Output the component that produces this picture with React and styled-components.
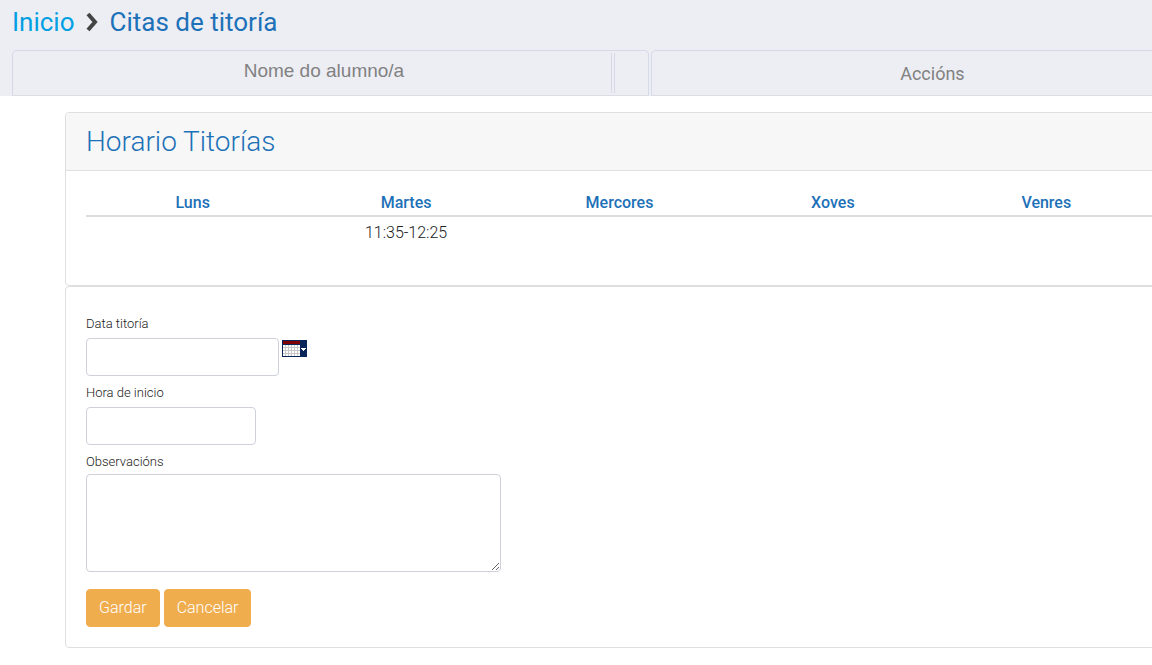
import React, { useState } from 'react';
import styled, { createGlobalStyle, css } from 'styled-components';

const days = ['Luns', 'Martes', 'Mercores', 'Xoves', 'Venres'];
const hours = ['', '11:35-12:25', '', '', ''];

export default function App() {
    const [form, setForm] = useState({ date: '', start: '', notes: '' });
    const change = (e) => setForm({ ...form, [e.target.name]: e.target.value });

    return (
        <Page>
            <GlobalStyle />
            <Header>
                <Breadcrumb aria-label="breadcrumb">
                    <a href="#inicio">Inicio</a>
                    <Chevron viewBox="0 0 15 20" aria-hidden="true">
                        <path d="M3 2 L10 10 L3 18" />
                    </Chevron>
                    <Title>Citas de titoría</Title>
                </Breadcrumb>
                <Tabs>
                    <NameTab>
                        <Name>Nome do alumno/a</Name>
                        <Divider />
                    </NameTab>
                    <ActionsTab>Accións</ActionsTab>
                </Tabs>
            </Header>
            <main>
                <Cards>
                    <Card>
                        <CardHeader>
                            <CardTitle>Horario Titorías</CardTitle>
                        </CardHeader>
                        <CardBody>
                            <Schedule>
                                <thead>
                                    <tr>{days.map((day) => <th key={day} scope="col">{day}</th>)}</tr>
                                </thead>
                                <tbody>
                                    <tr>{hours.map((hour, i) => <td key={days[i]}>{hour}</td>)}</tr>
                                </tbody>
                            </Schedule>
                        </CardBody>
                    </Card>
                    <Card>
                        <Form onSubmit={(e) => e.preventDefault()}>
                            <Label htmlFor="date">Data titoría</Label>
                            <DateRow>
                                <Input id="date" name="date" $width={193} value={form.date} onChange={change} />
                                <PickerButton type="button" aria-label="Calendario">
                                    <CalendarIcon />
                                </PickerButton>
                            </DateRow>
                            <Label htmlFor="start">Hora de inicio</Label>
                            <Input id="start" name="start" $width={170} value={form.start} onChange={change} />
                            <Label htmlFor="notes">Observacións</Label>
                            <TextArea id="notes" name="notes" value={form.notes} onChange={change} />
                            <Buttons>
                                <Button type="submit">Gardar</Button>
                                <Button type="button">Cancelar</Button>
                            </Buttons>
                        </Form>
                    </Card>
                </Cards>
            </main>
        </Page>
    );
}

function CalendarIcon() {
    return (
        <svg width="25" height="17" viewBox="0 0 25 17" shapeRendering="crispEdges" aria-hidden="true">
            <rect width="25" height="17" fill="#0a2558" />
            <rect x="1" y="1" width="17" height="3" fill="#800000" />
            <rect x="1" y="5" width="17" height="11" fill="#c8c8c8" />
            {[5, 8, 11, 14].map((y) =>
                [1, 4, 7, 10, 13, 16].map((x) => (
                    <rect key={`${x}-${y}`} x={x} y={y} width="2" height="2" fill="#fff" />
                ))
            )}
            <path d="M19 8h5v1h-1v1h-1v1h-1v-1h-1v-1h-1z" fill="#fff" />
        </svg>
    );
}

const GlobalStyle = createGlobalStyle`
*, *::before, *::after {
    box-sizing: border-box;
}
body {
    margin: 0;
    background: #fff;
    color: #222;
    font-family: Roboto, "Liberation Sans", sans-serif;
    font-size: 16px;
    font-weight: 300;
    line-height: 24px;
}
`

const Page = styled.div`
    overflow-x: hidden;
`

const Header = styled.header`
    background: #edeef4;
    padding: 6px 0 0 12px;
`

const Breadcrumb = styled.nav`
    display: flex;
    align-items: center;
    gap: 10px;
    font-size: 26px;
    font-weight: 400;
    line-height: 32px;
    margin-bottom: 12px;
    a {
        color: #009fe3;
        text-decoration: none;
    }
`

const Title = styled.h1`
    margin: 0;
    color: #1d71b8;
    font: inherit;
`

const Chevron = styled.svg`
    width: 15px;
    height: 20px;
    fill: none;
    stroke: #444;
    stroke-width: 4;
`

/* the tab strip runs on past the right edge of the window */
const Tabs = styled.div`
    display: flex;
    gap: 2px;
    margin-right: -62px;
    color: #818181;
`

const tab = css`
    height: 46px;
    border: 1px solid #d5d9e8;
    border-bottom-color: #dcdde4;
    border-radius: 5px 5px 0 0;
`

const NameTab = styled.div`
    ${tab}
    display: flex;
    flex: 637 1 0;
    padding: 2px 0;
`

const Name = styled.div`
    flex: 1;
    padding-left: 24px;
    border-right: 1px solid #d5d9e8;
    text-align: center;
    font-family: "Liberation Sans", Arial, sans-serif;
    font-size: 19px;
    font-weight: 400;
    line-height: 36px;
`

const Divider = styled.div`
    width: 34px;
    margin-left: 2px;
    border-left: 1px solid #d5d9e8;
`

const ActionsTab = styled.div`
    ${tab}
    flex: 563 1 0;
    text-align: center;
    font-size: 18px;
    font-weight: 400;
    line-height: 46px;
`

const Cards = styled.div`
    margin: 16px -22px 0 65px;
`

const Card = styled.section`
    border: 1px solid #dedfe0;
    border-radius: 4px;
    background: #fff;
`

const CardHeader = styled.div`
    padding: 12px 20px;
    background: #f7f7f7;
    border-bottom: 1px solid #dedfe0;
    border-radius: 4px 4px 0 0;
`

const CardTitle = styled.h2`
    margin: 0;
    color: #1d71b8;
    font-size: 28px;
    font-weight: 300;
    line-height: 33px;
`

const CardBody = styled.div`
    padding: 20px 20px 40px;
`

const Schedule = styled.table`
    width: 100%;
    table-layout: fixed;
    border-collapse: collapse;
    text-align: center;
    th {
        padding: 0;
        color: #1d71b8;
        font-weight: 500;
        border-bottom: 2px solid #dcdddd;
    }
    td {
        height: 28px;
        padding: 4px 0 0;
    }
`

const Form = styled.form`
    display: flex;
    flex-direction: column;
    align-items: flex-start;
    padding: 24px 20px 20px;
`

const Label = styled.label`
    font-size: 13px;
    line-height: 25px;
`

const field = css`
    border: 1px solid #ced1db;
    border-radius: 4px;
    background: #fff;
    color: #55595c;
    font: inherit;
    padding: 6px 12px;
`

const Input = styled.input`
    ${field}
    width: ${(props) => props.$width}px;
    height: 38px;
    margin: 2px 0 4px;
`

const TextArea = styled.textarea`
    ${field}
    width: 415px;
    max-width: 100%;
    height: 98px;
`

const DateRow = styled.div`
    display: flex;
    align-items: flex-start;
    gap: 3px;
`

const PickerButton = styled.button`
    display: flex;
    margin: 4px 0 0;
    padding: 0;
    border: 0;
    background: none;
    cursor: pointer;
`

const Buttons = styled.div`
    display: flex;
    gap: 4px;
    margin-top: 17px;
`

const Button = styled.button`
    height: 38px;
    padding: 0 12px;
    border: 1px solid #f0ad4e;
    border-radius: 4px;
    background: #f0ad4e;
    color: #fff;
    font: inherit;
    cursor: pointer;
    &:hover{
        background: #ec971f;
    }
`
